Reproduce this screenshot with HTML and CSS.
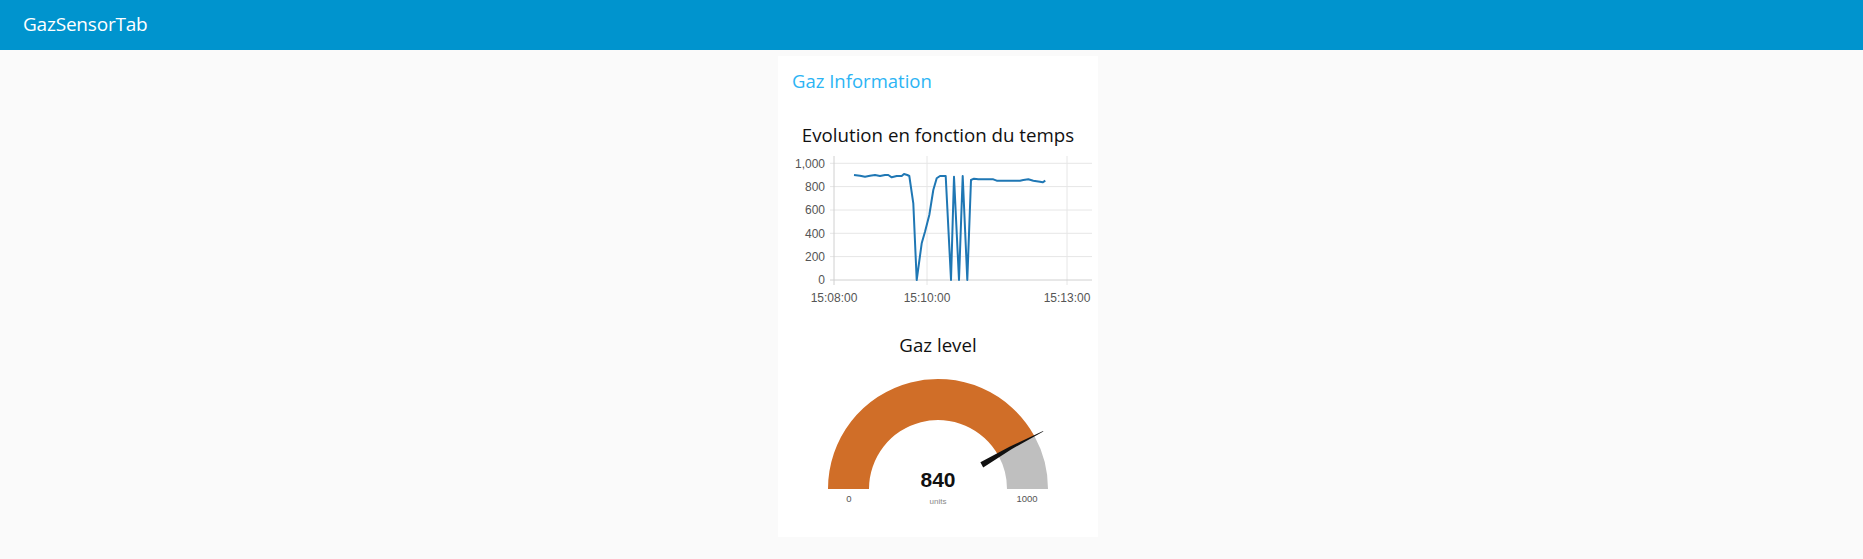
FILE: index.html
```html
<!DOCTYPE html>
<html lang="en">
<head>
<meta charset="utf-8">
<title>GazSensorTab</title>
<link rel="stylesheet" href="styles.css">
</head>
<body>
<header class="toolbar"><span class="toolbar-title">GazSensorTab</span></header>
<main class="content">
  <section class="group">
    <div class="group-title">Gaz Information</div>
    <div class="widget-title chart-title">Evolution en fonction du temps</div>
    <svg class="chart" width="320" height="162" viewBox="0 94 320 162">
      <g class="grid">
        <line x1="52" y1="107.3" x2="314" y2="107.3"/>
        <line x1="52" y1="130.6" x2="314" y2="130.6"/>
        <line x1="52" y1="154" x2="314" y2="154"/>
        <line x1="52" y1="177.3" x2="314" y2="177.3"/>
        <line x1="52" y1="200.6" x2="314" y2="200.6"/>
        <line x1="149" y1="100" x2="149" y2="229"/>
        <line x1="289" y1="100" x2="289" y2="229"/>
      </g>
      <g class="axis">
        <line x1="56" y1="100" x2="56" y2="229"/>
        <line x1="52" y1="224" x2="314" y2="224"/>
      </g>
      <g class="ylabels">
        <text x="47" y="111.5">1,000</text>
        <text x="47" y="134.8">800</text>
        <text x="47" y="158.2">600</text>
        <text x="47" y="181.5">400</text>
        <text x="47" y="204.8">200</text>
        <text x="47" y="228.2">0</text>
      </g>
      <g class="xlabels">
        <text x="56" y="246">15:08:00</text>
        <text x="149" y="246">15:10:00</text>
        <text x="289" y="246">15:13:00</text>
      </g>
      <polyline class="series" points="76,119 82,119.7 87,120.7 92,119.7 97,119 102,120 107,119 110.3,119 113.7,121.3 118.7,120 123.7,120 126,118 129.3,119 131.3,120 135.3,147.3 138.7,224 143.7,187.3 147,175.7 151.3,159 155.3,134 158.7,122.3 162,120 167.7,120 173,224 176,120.7 181,224 184.7,120 189.3,224 193,124 196,122.7 200.3,123.3 215.3,123.3 218.7,124.7 242,124.7 245.3,124 250.3,123.3 255.3,124.7 262,125.7 264.7,126.3 267.3,124.7"/>
    </svg>
    <div class="widget-title gauge-title">Gaz level</div>
    <svg class="gauge" width="320" height="177" viewBox="0 304 320 177">
      <path class="gauge-value" d="M50 433 A110 110 0 0 1 256.4 380 L220.5 399.8 A69 69 0 0 0 91 433 Z"/>
      <path class="gauge-rest" d="M256.4 380 A110 110 0 0 1 270 433 L229 433 A69 69 0 0 0 220.5 399.8 Z"/>
      <polygon class="needle" points="205.2,411.5 202.4,406.3 232,390.5 265.1,375.0 265.3,375.4 233.5,393.2"/>
      <text class="gauge-number" x="160" y="431">840</text>
      <text class="gauge-units" x="160" y="448">units</text>
      <text class="gauge-limit" x="71" y="446">0</text>
      <text class="gauge-limit" x="249" y="446">1000</text>
    </svg>
  </section>
</main>
</body>
</html>
```
FILE: styles.css
```css
html, body {
  margin: 0;
  padding: 0;
}
body {
  background: #fafafa;
  font-family: "Open Sans", "Noto Sans", sans-serif;
  color: #111;
}
.toolbar {
  height: 50px;
  background: #0094ce;
  display: flex;
  align-items: center;
  padding-left: 23px;
  box-sizing: border-box;
}
.toolbar-title {
  color: #fff;
  font-size: 19px;
  letter-spacing: -0.2px;
  line-height: 1;
  margin-top: -1px;
}
.content {
  padding: 6px 0 0 778px;
}
.group {
  width: 320px;
  height: 481px;
  background: #fff;
  display: flex;
  flex-direction: column;
}
.group-title {
  height: 48px;
  line-height: 48px;
  padding-left: 14px;
  font-size: 18.5px;
  color: #2cb4f4;
  padding-top: 1px;
  box-sizing: border-box;
}
.widget-title {
  height: 30px;
  line-height: 30px;
  text-align: center;
  font-size: 18.7px;
  color: #111;
}
.chart-title {
  margin-top: 16px;
}
.gauge-title {
  margin-top: 18px;
}
.chart, .gauge {
  display: block;
}
.grid line {
  stroke: #e6e6e6;
  stroke-width: 1;
}
.axis line {
  stroke: #d0d0d0;
  stroke-width: 1;
}
.ylabels text {
  font-family: "Liberation Sans", Arial, sans-serif;
  font-size: 12px;
  fill: #555;
  text-anchor: end;
}
.xlabels text {
  font-family: "Liberation Sans", Arial, sans-serif;
  font-size: 12px;
  fill: #555;
  text-anchor: middle;
}
.series {
  fill: none;
  stroke: #1f77b4;
  stroke-width: 2;
  stroke-linejoin: round;
}
.gauge-value {
  fill: #d06e28;
}
.gauge-rest {
  fill: #bfbfbf;
}
.needle {
  fill: #111;
}
.gauge-number {
  font-family: "Liberation Sans", Arial, sans-serif;
  font-weight: bold;
  font-size: 21px;
  fill: #111;
  text-anchor: middle;
}
.gauge-units {
  font-family: "Liberation Sans", Arial, sans-serif;
  font-size: 8px;
  fill: #888;
  text-anchor: middle;
}
.gauge-limit {
  font-family: "Liberation Sans", Arial, sans-serif;
  font-size: 9.5px;
  fill: #555;
  text-anchor: middle;
}
```
